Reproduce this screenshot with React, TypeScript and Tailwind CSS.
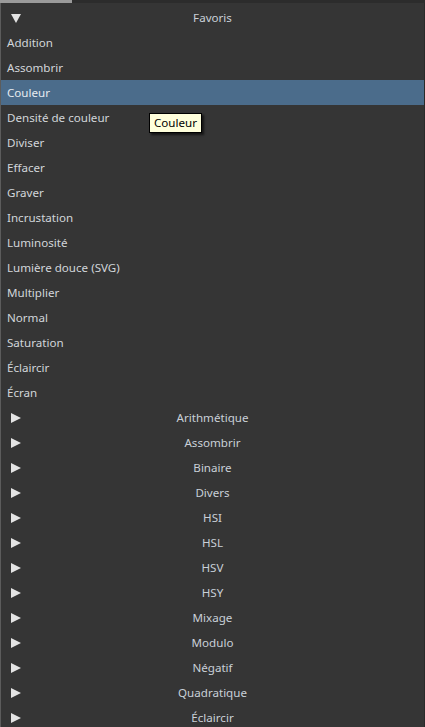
import { useState } from 'react';

const favorites = [
  'Addition',
  'Assombrir',
  'Couleur',
  'Densité de couleur',
  'Diviser',
  'Effacer',
  'Graver',
  'Incrustation',
  'Luminosité',
  'Lumière douce (SVG)',
  'Multiplier',
  'Normal',
  'Saturation',
  'Éclaircir',
  'Écran',
];

const groups = [
  'Arithmétique',
  'Assombrir',
  'Binaire',
  'Divers',
  'HSI',
  'HSL',
  'HSV',
  'HSY',
  'Mixage',
  'Modulo',
  'Négatif',
  'Quadratique',
  'Éclaircir',
];

function Arrow({ open }: { open?: boolean }) {
  return (
    <svg width="12" height="12" viewBox="0 0 12 12" className="shrink-0">
      {open ? (
        <polygon points="1,2 11,2 6,11" fill="#e4e4e4" />
      ) : (
        <polygon points="1,1 11,6 1,11" fill="#e4e4e4" />
      )}
    </svg>
  );
}

export default function App() {
  const [selected, setSelected] = useState('Couleur');

  return (
    <div
      className="w-[425px] h-[727px] overflow-hidden bg-[#353535] text-[11.6px] relative"
      style={{ fontFamily: '"Noto Sans", "DejaVu Sans", sans-serif' }}
    >
      {/* bande du haut */}
      <div className="flex h-[3px]">
        <div className="w-[72px] bg-[#9a9a9a]" />
        <div className="flex-1 bg-[#2c2c2c]" />
      </div>

      <div className="border-l border-[#5c5c5c] border-r border-r-[#2a2a2a] pt-[2px]">
        {/* en-tête Favoris */}
        <div className="relative flex items-center h-[25px] px-[9px]">
          <Arrow open />
          <span className="absolute left-0 right-0 text-center text-[#c9d0d8]">Favoris</span>
        </div>

        {favorites.map((name) => (
          <div
            key={name}
            onClick={() => setSelected(name)}
            className={
              'flex items-center h-[25px] px-[6px] ' +
              (selected === name ? 'bg-[#4b6c8b] text-[#e6ebf0]' : 'text-[#d2d6da]')
            }
          >
            {name}
          </div>
        ))}

        {groups.map((name, i) => (
          <div key={name + i} className="relative flex items-center h-[25px] px-[9px]">
            <Arrow />
            <span className="absolute left-0 right-0 text-center text-[#c9d0d8]">{name}</span>
          </div>
        ))}
      </div>

      {/* infobulle */}
      <div className="absolute left-[149px] top-[113px] bg-[#ffffdc] border border-black px-[4px] h-[20px] flex items-center text-black shadow-[2px_2px_2px_rgba(0,0,0,0.6)]">
        Couleur
      </div>
    </div>
  );
}
